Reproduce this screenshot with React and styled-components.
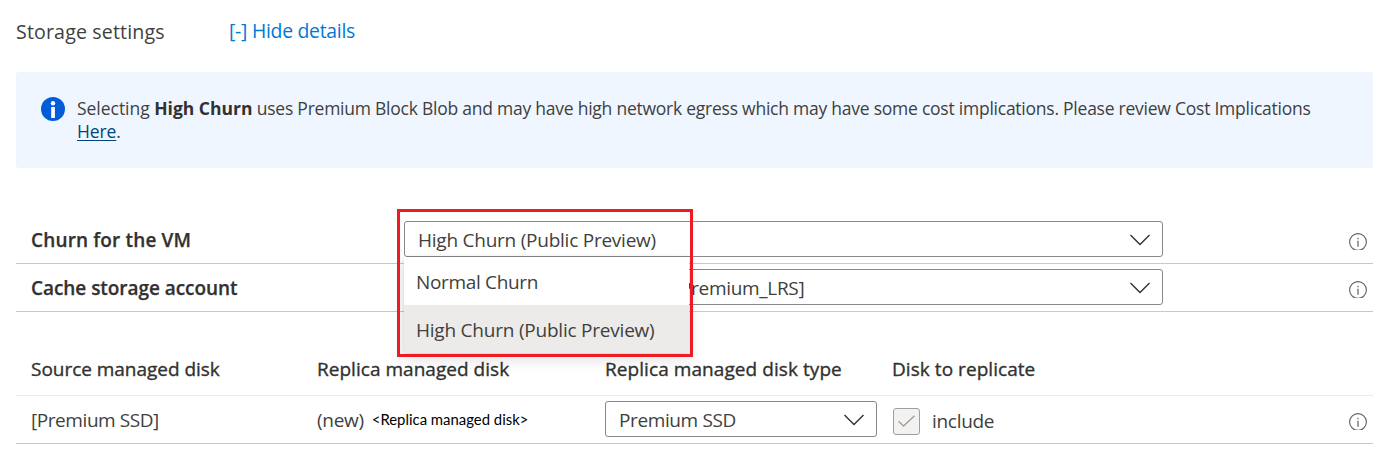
import React from "react";
import styled, { createGlobalStyle } from "styled-components";

const GlobalStyle = createGlobalStyle`
  * { box-sizing: border-box; }
  body {
    margin: 0;
    background: #fff;
    color: #323130;
    font-family: "Open Sans", "Noto Sans", sans-serif;
    overflow: hidden;
  }
`;

const Page = styled.main`
  width: 1389px;
  height: 472px;
  padding: 0 16px;
`;

const Text = styled.span`
  display: inline-block;
  white-space: nowrap;
  font-size: ${(p) => p.$size || 19}px;
  font-weight: 400;
  letter-spacing: ${(p) => p.$track || 0}px;
  color: #403f3e;
`;

const HeadText = styled(Text)`
  color: #323130;
  -webkit-text-stroke: 0.35px #323130;
`;

const Label = styled(Text)`
  padding-top: 2px;
  color: #323130;
  font-weight: 600;
  -webkit-text-stroke: 0.25px #323130;
`;

const Header = styled.header`
  display: flex;
  align-items: center;
  height: 72px;
  padding-bottom: 11px;
`;

const Title = styled.div`
  width: 213px;
  padding-top: 2px;
`;

const ToggleLink = styled.a`
  cursor: pointer;

  ${Text} {
    color: #0078d4;
  }
`;

const Banner = styled.section`
  display: flex;
  height: 96px;
  width: 1357px;
  padding: 25px 25px 0;
  border-radius: 3px;
  background: #eff6ff;
`;

const BannerText = styled.p`
  margin: 0 0 0 12px;
  line-height: 23px;
  white-space: nowrap;
  font-size: 17.5px;
  letter-spacing: -0.24px;
  color: #403f3e;

  b {
    color: #323130;
    letter-spacing: 0;
  }
`;

const Lead = styled.span`
  letter-spacing: -0.03px;
`;

const HereLink = styled.a`
  color: #004578;
  letter-spacing: -0.1px;
  text-decoration: underline;
  text-decoration-thickness: 1px;
  text-underline-offset: 2px;
`;

const Settings = styled.section`
  margin-top: 48px;
`;

const SettingRow = styled.div`
  display: grid;
  grid-template-columns: 373px 759px 1fr;
  align-items: center;
  height: 48px;
  padding: 0 6px 1px 15px;
  border-bottom: 1px solid #c8c8c8;
`;

const SelectWrap = styled.div`
  position: relative;
  width: ${(p) => p.$width}px;
`;

const SelectBox = styled.div`
  display: flex;
  align-items: center;
  justify-content: space-between;
  height: 36px;
  margin-top: -1px;
  padding: ${(p) => p.$drop ?? 2}px 12px 0 ${(p) => p.$indent || 13}px;
  border: 1px solid #8a8886;
  border-radius: 3px;
  background: #fff;
`;

const Menu = styled.div`
  position: absolute;
  z-index: 1;
  top: 35px;
  left: 0;
  width: 285px;
  background: #fff;
  box-shadow: 0 6px 14px rgba(0, 0, 0, 0.13), 0 1px 4px rgba(0, 0, 0, 0.11);
`;

const Option = styled.div`
  display: flex;
  align-items: center;
  height: 48px;
  padding: 2px 0 0 12px;
  background: ${(p) => (p.$selected ? "#edebe9" : "#fff")};
`;

const Highlight = styled.div`
  position: absolute;
  z-index: 2;
  top: -13px;
  left: -7px;
  width: 296px;
  height: 148px;
  border: 3px solid #ed1c24;
  pointer-events: none;
`;

const InfoCell = styled.div`
  display: flex;
  justify-content: flex-end;
  margin-top: ${(p) => p.$shift || 4}px;
`;

const DiskTable = styled.section`
  margin-top: 32px;
`;

const DiskRow = styled.div`
  display: grid;
  grid-template-columns: 286px 288px 287px 1fr 18px;
  align-items: center;
  height: ${(p) => (p.$head ? 52 : 48)}px;
  padding: 0 6px ${(p) => (p.$head ? 2 : 0)}px 15px;
  border-bottom: 1px solid ${(p) => (p.$head ? "#eaeaea" : "#c8c8c8")};
`;

const Replica = styled.div`
  display: flex;
  align-items: center;
  gap: 8px;
`;

const ReplicaName = styled.span`
  color: #000;
  font-family: Lato, sans-serif;
  font-size: 14.9px;
  white-space: nowrap;
  margin-top: -2px;
`;

const Include = styled.div`
  display: flex;
  align-items: center;
  gap: 12px;
  margin-left: 1px;
  padding-top: 3px;
`;

const CheckBox = styled.span`
  display: flex;
  align-items: center;
  justify-content: center;
  width: 27px;
  height: 27px;
  border: 1px solid #a19f9d;
  border-radius: 3px;
  background: #f3f2f1;
`;

const Chevron = () => (
  <svg width="20" height="12" viewBox="0 0 20 12" fill="none">
    <path d="M.5 1 10 10.5 19.5 1" stroke="#323130" strokeWidth="1.4" />
  </svg>
);

const InfoBadge = () => (
  <svg width="24" height="24" viewBox="0 0 24 24">
    <circle cx="12" cy="12" r="12" fill="#015cda" />
    <circle cx="12" cy="6.2" r="2.2" fill="#fff" />
    <rect x="10.2" y="10" width="3.7" height="11" fill="#fff" />
  </svg>
);

const InfoIcon = () => (
  <svg width="18" height="17" viewBox="0 0 18 17" fill="none">
    <circle cx="9" cy="9" r="8.4" stroke="#605e5c" strokeWidth="1.1" />
    <path d="M9 7.7V13.7M9 4.7V6.3" stroke="#8a8886" strokeWidth="1.6" />
  </svg>
);

const CheckMark = () => (
  <svg width="17" height="12" viewBox="0 0 17 12" fill="none">
    <path d="M.5 6.2 5.6 11 16.5 .7" stroke="#a19f9d" strokeWidth="1.4" />
  </svg>
);

export default function App() {
  return (
    <>
      <GlobalStyle />
      <Page>
        <Header>
          <Title><Text $size={19.6} $track={0.15}>Storage settings</Text></Title>
          <ToggleLink><Text $size={19.4} $track={-0.27}>[-] Hide details</Text></ToggleLink>
        </Header>

        <Banner>
          <InfoBadge />
          <BannerText>
            <Lead>Selecting </Lead><b>High Churn</b> uses Premium Block Blob and may have high network egress which may have some cost implications. Please review Cost Implications
            <br />
            <HereLink>Here</HereLink>.
          </BannerText>
        </Banner>

        <Settings>
          <SettingRow>
            <Label $track={0.15}>Churn for the VM</Label>
            <SelectWrap $width={759}>
              <SelectBox>
                <Text $track={-0.24}>High Churn (Public Preview)</Text>
                <Chevron />
              </SelectBox>
              <Menu>
                <Option><Text $track={-0.33}>Normal Churn</Text></Option>
                <Option $selected><Text $track={-0.22}>High Churn (Public Preview)</Text></Option>
              </Menu>
              <Highlight />
            </SelectWrap>
            <InfoCell $shift={5}><InfoIcon /></InfoCell>
          </SettingRow>
          <SettingRow>
            <Label $track={-0.05}>Cache storage account</Label>
            <SelectWrap $width={759}>
              <SelectBox $indent={269}>
                <Text $track={-0.3}>[Premium_LRS]</Text>
                <Chevron />
              </SelectBox>
            </SelectWrap>
            <InfoCell $shift={5}><InfoIcon /></InfoCell>
          </SettingRow>
        </Settings>

        <DiskTable>
          <DiskRow $head>
            <HeadText $track={-0.03}>Source managed disk</HeadText>
            <HeadText $track={0.03}>Replica managed disk</HeadText>
            <HeadText $track={0.07}>Replica managed disk type</HeadText>
            <HeadText $track={0.05}>Disk to replicate</HeadText>
          </DiskRow>
          <DiskRow>
            <Text $track={-0.43}>[Premium SSD]</Text>
            <Replica>
              <Text $track={-0.3}>(new)</Text>
              <ReplicaName>&lt;Replica managed disk&gt;</ReplicaName>
            </Replica>
            <SelectWrap $width={272}>
              <SelectBox $drop={1}>
                <Text $track={-0.38}>Premium SSD</Text>
                <Chevron />
              </SelectBox>
            </SelectWrap>
            <Include>
              <CheckBox><CheckMark /></CheckBox>
              <Text $track={-0.3}>include</Text>
            </Include>
            <InfoCell><InfoIcon /></InfoCell>
          </DiskRow>
        </DiskTable>
      </Page>
    </>
  );
}
